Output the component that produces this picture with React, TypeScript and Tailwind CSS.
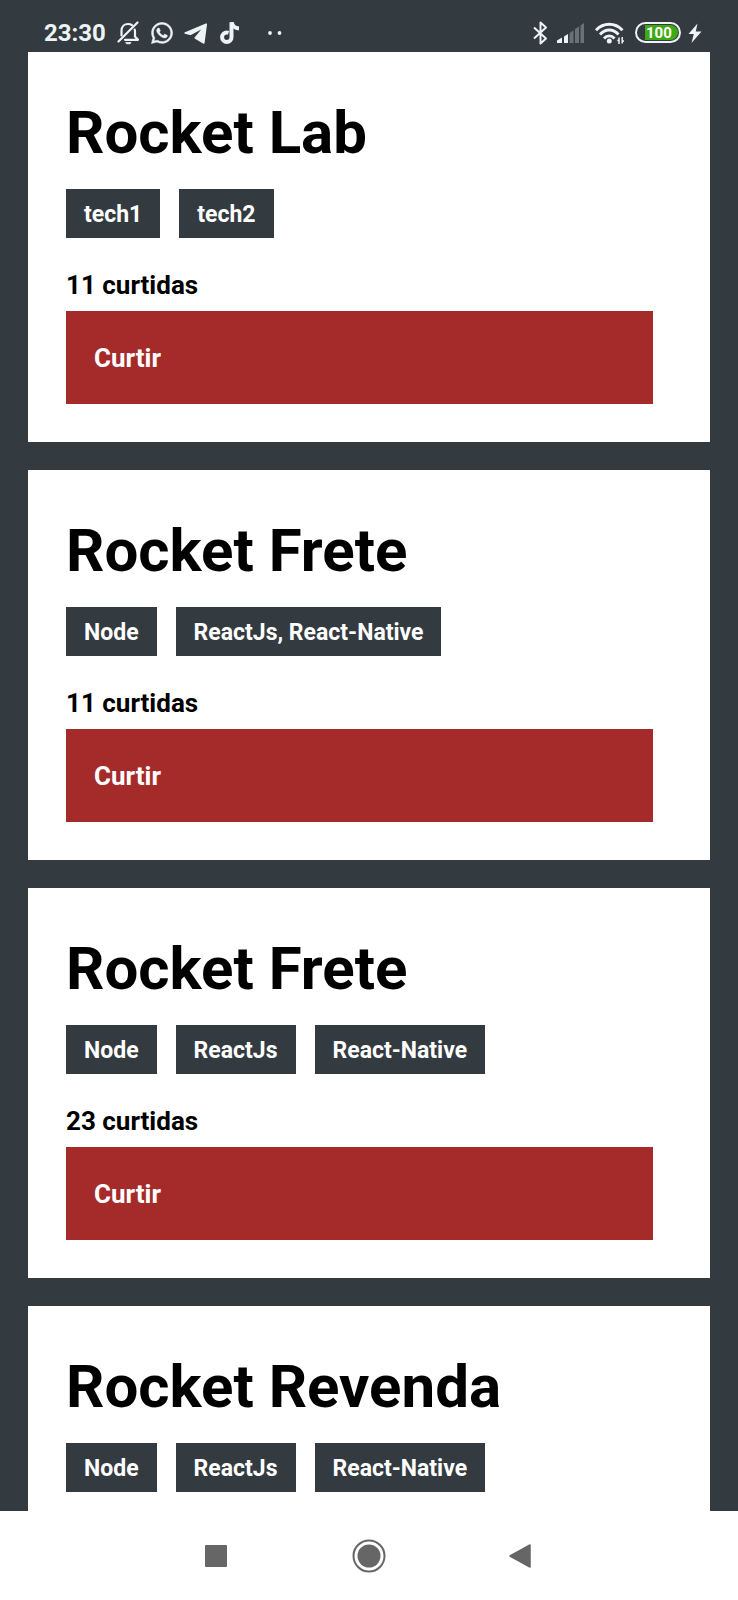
import React, { useState } from "react";
import { FaWhatsapp } from "react-icons/fa";

type Repository = {
  id: number;
  title: string;
  techs: string[];
  likes?: number;
};

const initialRepositories: Repository[] = [
  { id: 1, title: "Rocket Lab", techs: ["tech1", "tech2"], likes: 11 },
  { id: 2, title: "Rocket Frete", techs: ["Node", "ReactJs, React-Native"], likes: 11 },
  { id: 3, title: "Rocket Frete", techs: ["Node", "ReactJs", "React-Native"], likes: 23 },
  { id: 4, title: "Rocket Revenda", techs: ["Node", "ReactJs", "React-Native"] },
];

function BellOffIcon() {
  return (
    <svg width="24" height="24" viewBox="0 0 24 24" fill="none" stroke="currentColor" strokeWidth="2.200" strokeLinejoin="round" strokeLinecap="round" aria-hidden="true">
      <path d="M5.500 14.500V10C5.500 5.500 8.500 3 12 3c1.600 0 2.900 .4 4 1.200" />
      <path d="M18.700 8.500c.2 .8 .3 1.500 .3 2.400v4.600L22 18.800H9" />
      <path d="M21.500 1.500L2.500 20.500" />
      <path d="M10 21.700h5l-1 1h-3z" fill="currentColor" strokeWidth="1" />
    </svg>
  );
}

function TelegramIcon() {
  return (
    <svg width="24" height="24" viewBox="0 0 24 24" fill="currentColor" aria-hidden="true">
      <path d="M1 11.300L21.800 2.500c.8-.3 1.300 .2 1.200 1l-2.400 18.300c-.1 .9-.9 1.200-1.600 .8l-8-4.800c-.7-.5-.7-1-.2-1.600l6.400-7.800-9.800 5.400c-.5 .3-1 .3-1.500 .1L1 12.800c-.9-.4-.9-1.100 0-1.500z" />
    </svg>
  );
}

function TiktokIcon() {
  return (
    <svg width="24" height="24" viewBox="0 0 24 24" fill="none" stroke="currentColor" strokeWidth="4" aria-hidden="true">
      <path d="M13.500 1.200V16.300a4.700 4.700 0 1 1-4.700-4.700c.6 0 1.200 .1 1.700 .3" />
      <path d="M13.800 1.200c.3 3.300 3.100 6 7.200 6.200" />
    </svg>
  );
}

function MoreDotsIcon() {
  return (
    <svg className="ml-4" width="14" height="24" viewBox="0 0 14 24" fill="currentColor" aria-hidden="true">
      <circle cx="2" cy="12" r="1.900" />
      <circle cx="11.500" cy="12" r="1.900" />
    </svg>
  );
}

function BluetoothIcon() {
  return (
    <svg width="16" height="24" viewBox="0 0 16 24" fill="none" stroke="currentColor" strokeWidth="2" strokeLinejoin="round" aria-hidden="true">
      <path d="M1 6.500L13 17.500L7.500 22.500V1.500L13 6.500L1 17.500" />
    </svg>
  );
}

function SignalIcon() {
  return (
    <svg width="32" height="24" viewBox="0 0 32 24" fill="currentColor" aria-hidden="true">
      <path d="M1 19.500L6 16.500V22H1z" />
      <path d="M8 15.500L12 13V22H8z" />
      <g opacity="0.3">
        <path d="M13.500 12L17.500 9.500V22H13.500z" />
        <path d="M19 8L23 5.500V22H19z" />
        <path d="M24.500 4.500L28 2V22H24.500z" />
      </g>
    </svg>
  );
}

function WifiIcon() {
  return (
    <svg width="33" height="24" viewBox="0 0 33 24" fill="none" stroke="currentColor" strokeWidth="2.900" aria-hidden="true">
      <path d="M1 9.200C8.500 1.200 20 1.200 27.500 9.200" />
      <path d="M5 13.500C10.500 7.500 18 7.500 23.500 13.500" />
      <path d="M9 17.500C12 14 16.500 14 19.500 17.500" />
      <circle cx="14.300" cy="20" r="2.500" fill="currentColor" stroke="none" />
      <path d="M24 16.500V23M27.200 16V22.500" strokeWidth="1.500" />
      <path d="M22.300 19.500H24M27.200 20H29" strokeWidth="1.500" />
    </svg>
  );
}

function BoltIcon() {
  return (
    <svg width="14" height="24" viewBox="0 0 14 24" fill="currentColor" aria-hidden="true">
      <path d="M9.500 2.500L.5 13H5.800L3.500 22L13.500 10.500H7.800z" />
    </svg>
  );
}

function Battery({ level }: { level: number }) {
  return (
    <div className="flex h-[21px] w-[46px] rounded-full border-2 border-[#eef3f5] p-px pl-2" aria-label={`${level}%`}>
      <div className="flex flex-1 items-center rounded-r-full bg-[#3fa914] pl-px text-[15px] leading-4 font-bold text-white">
        {level}
      </div>
    </div>
  );
}

function StatusBar() {
  return (
    <header className="flex h-[52px] shrink-0 items-center justify-between pt-[13px] pr-9 pl-11 text-[#eef3f5]">
      <div className="flex items-center gap-[10px]">
        <time className="text-[24px] leading-6 font-bold">23:30</time>
        <BellOffIcon />
        <FaWhatsapp size={24} stroke="currentColor" strokeWidth={12} aria-hidden="true" />
        <TelegramIcon />
        <TiktokIcon />
        <MoreDotsIcon />
      </div>
      <div className="flex items-center gap-[7px]">
        <BluetoothIcon />
        <SignalIcon />
        <WifiIcon />
        <Battery level={100} />
        <BoltIcon />
      </div>
    </header>
  );
}

function RepositoryCard({ repository, onLike }: { repository: Repository; onLike: () => void }) {
  return (
    <article className="flex shrink-0 flex-col bg-white p-[38px]">
      <h2 className="text-[60px] leading-[86px] font-bold text-black">{repository.title}</h2>
      <ul className="mt-[13px] flex gap-[19px]">
        {repository.techs.map((tech) => (
          <li key={tech} className="bg-[#333a40] px-[18px] pt-3 pb-[10px] text-[23px] leading-[27px] font-bold text-white">
            {tech}
          </li>
        ))}
      </ul>
      {repository.likes !== undefined && (
        <>
          <p className="mt-8 text-[26px] leading-[30px] font-bold text-black">{repository.likes} curtidas</p>
          <button
            type="button"
            onClick={onLike}
            className="mt-[11px] mr-[19px] bg-[#a52a2a] px-7 pt-8 pb-[31px] text-left text-[26px] leading-[30px] font-bold text-white"
          >
            Curtir
          </button>
        </>
      )}
    </article>
  );
}

function NavigationBar() {
  return (
    <nav className="flex h-[89px] shrink-0 items-center justify-center gap-[116px] bg-white text-[#666666]">
      <button type="button" aria-label="Recentes">
        <svg width="36" height="36" viewBox="0 0 36 36" fill="currentColor" aria-hidden="true">
          <rect x="6" y="7" width="22" height="22" rx="1" />
        </svg>
      </button>
      <button type="button" aria-label="Início">
        <svg width="36" height="36" viewBox="0 0 36 36" fill="currentColor" aria-hidden="true">
          <circle cx="18" cy="18" r="11.500" />
          <circle cx="18" cy="18" r="15.500" fill="none" stroke="currentColor" strokeWidth="2" />
        </svg>
      </button>
      <button type="button" aria-label="Voltar">
        <svg width="36" height="36" viewBox="0 0 36 36" fill="currentColor" stroke="currentColor" strokeLinejoin="round" aria-hidden="true">
          <path d="M7 18L27 7V29z" strokeWidth="1.500" />
        </svg>
      </button>
    </nav>
  );
}

export default function App() {
  const [repositories, setRepositories] = useState(initialRepositories);

  const like = (id: number) =>
    setRepositories((current) =>
      current.map((item) => (item.id === id ? { ...item, likes: (item.likes ?? 0) + 1 } : item)),
    );

  return (
    <div className="flex h-screen flex-col bg-[#333a40] font-['Roboto',sans-serif]">
      <StatusBar />
      <main className="flex min-h-0 flex-1 flex-col gap-7 overflow-hidden px-7">
        {repositories.map((repository) => (
          <RepositoryCard key={repository.id} repository={repository} onLike={() => like(repository.id)} />
        ))}
      </main>
      <NavigationBar />
    </div>
  );
}
